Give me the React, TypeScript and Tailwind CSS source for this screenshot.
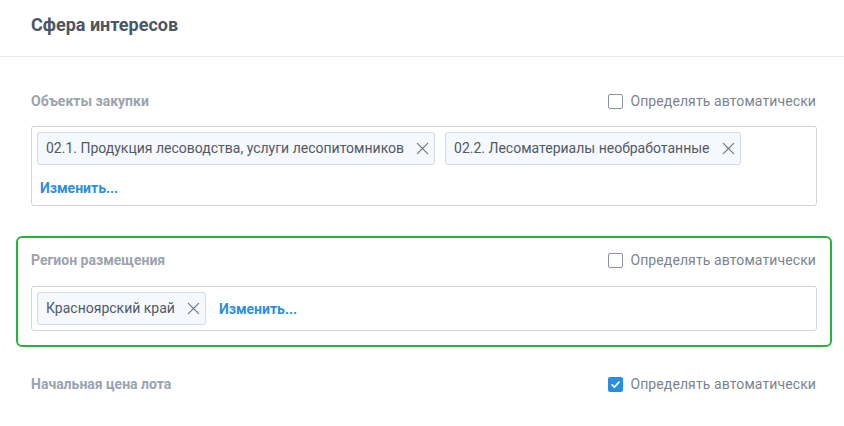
import React from 'react';

type FieldProps = {
  label: string;
  checked?: boolean;
};

// Строка заголовка поля с чекбоксом «Определять автоматически»
function FieldHeader({ label, checked = false }: FieldProps) {
  return (
    <div className="flex items-center justify-between h-[20px]">
      <span className="text-[14px] font-bold text-[#9aa3ae]">{label}</span>
      <label className="flex items-center gap-[7px] pr-[1px]">
        {checked ? (
          <span className="w-[15px] h-[15px] rounded-[2px] bg-[#2a8ee0] flex items-center justify-center">
            <svg width="11" height="11" viewBox="0 0 12 12" fill="none">
              <path d="M2.2 6.3 4.8 8.8 9.8 3.4" stroke="#fff" strokeWidth="1.8" strokeLinecap="round" strokeLinejoin="round" />
            </svg>
          </span>
        ) : (
          <span className="w-[15px] h-[15px] rounded-[2px] border border-[#8d949c] bg-white" />
        )}
        <span className="text-[14px] text-[#7b8490] tracking-[0.1px]">Определять автоматически</span>
      </label>
    </div>
  );
}

// Выбранный элемент с крестиком
function Chip({ text }: { text: string }) {
  return (
    <div className="h-[33px] flex items-center pl-[8px] pr-[5px] gap-[12px] rounded-[3px] border border-[#d3d9e0] bg-[#f5f8fc]">
      <span className="text-[14px] text-[#505a66]">{text}</span>
      <svg width="13" height="13" viewBox="0 0 12 12" fill="none">
        <path d="M1 1 11 11M11 1 1 11" stroke="#6f7782" strokeWidth="1.1" />
      </svg>
    </div>
  );
}

function ChangeLink() {
  return <a className="block text-[14px] font-bold text-[#2d8fdb] leading-[16px] cursor-pointer">Изменить...</a>;
}

export default function App() {
  return (
    <div className="w-[844px] h-[426px] bg-white overflow-hidden" style={{ fontFamily: 'Roboto, "Liberation Sans", sans-serif' }}>
      {/* Шапка блока */}
      <div className="h-[57px] px-[31px] pt-[13px] border-b border-[#e8ebee]">
        <h2 className="text-[18px] font-bold text-[#4c5663] leading-[24px]">Сфера интересов</h2>
      </div>

      <div className="pl-[16px] pr-[12px] pt-[34px]">
        {/* Объекты закупки */}
        <div className="pl-[15px] pr-[15px]">
          <FieldHeader label="Объекты закупки" />
          <div className="mt-[15px] border border-[#d0d6dc] rounded-[3px] px-[5px] pt-[5px] pb-[9px]">
            <div className="flex gap-[10px]">
              <Chip text="02.1. Продукция лесоводства, услуги лесопитомников" />
              <Chip text="02.2. Лесоматериалы необработанные" />
            </div>
            <div className="pt-[15px] pl-[3px] leading-[16px]">
              <ChangeLink />
            </div>
          </div>
        </div>

        {/* Регион размещения — выделенный блок */}
        <div className="mt-[30px] border-2 border-[#22b53c] rounded-[6px] px-[13px] pt-[12px] pb-[14px]">
          <FieldHeader label="Регион размещения" />
          <div className="mt-[16px] border border-[#d0d6dc] rounded-[3px] p-[5px] flex items-center gap-[13px]">
            <Chip text="Красноярский край" />
            <ChangeLink />
          </div>
        </div>

        {/* Начальная цена лота */}
        <div className="px-[15px] mt-[27px]">
          <FieldHeader label="Начальная цена лота" checked />
        </div>
      </div>
    </div>
  );
}
